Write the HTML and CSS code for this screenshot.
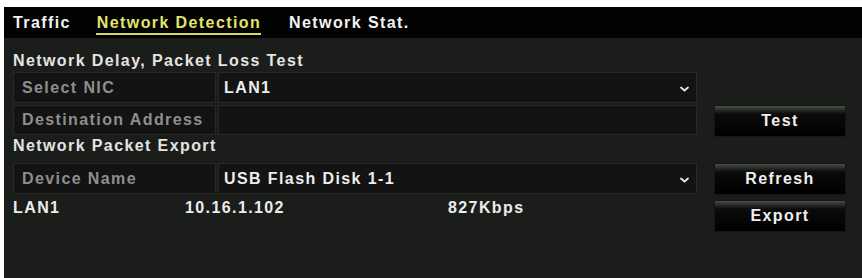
FILE: index.html
```html
<!DOCTYPE html>
<html lang="en">
<head>
<meta charset="utf-8">
<title>Network Detection</title>
<link rel="stylesheet" href="styles.css">
</head>
<body>
<div class="screen">
  <div class="tabs">
    <span class="tab">Traffic</span>
    <span class="tab active">Network Detection</span>
    <span class="tab">Network Stat.</span>
  </div>
  <div class="content">
    <div class="section-title first">Network Delay, Packet Loss Test</div>
    <div class="field">
      <div class="label">Select NIC</div>
      <div class="value">
        <span>LAN1</span>
        <svg class="chev" width="9" height="6" viewBox="0 0 9 6"><path d="M1 1.5 L4.5 4.5 L8 1.5" fill="none" stroke="#e8e8e8" stroke-width="1.8" stroke-linecap="round"/></svg>
      </div>
    </div>
    <div class="empty"></div>
    <div class="field second">
      <div class="label">Destination Address</div>
      <div class="value"></div>
    </div>
    <button class="btn second">Test</button>
    <div class="section-title">Network Packet Export</div>
    <div class="field">
      <div class="label">Device Name</div>
      <div class="value">
        <span>USB Flash Disk 1-1</span>
        <svg class="chev" width="9" height="6" viewBox="0 0 9 6"><path d="M1 1.5 L4.5 4.5 L8 1.5" fill="none" stroke="#e8e8e8" stroke-width="1.8" stroke-linecap="round"/></svg>
      </div>
    </div>
    <button class="btn">Refresh</button>
    <div class="stats">
      <span>LAN1</span>
      <span>10.16.1.102</span>
      <span>827Kbps</span>
    </div>
    <button class="btn export">Export</button>
  </div>
</div>
</body>
</html>
```

FILE: styles.css
```css
* { box-sizing: border-box; }

html, body {
  margin: 0;
  padding: 0;
  background: #ffffff;
  width: 862px;
  height: 278px;
  overflow: hidden;
}

body {
  font-family: "Liberation Sans", Arial, sans-serif;
  font-weight: bold;
  font-size: 16px;
  letter-spacing: 1.4px;
}

.screen {
  margin: 7px 0 0 4px;
  width: 858px;
  height: 271px;
  background: #1b1d1a;
  display: flex;
  flex-direction: column;
}

.tabs {
  height: 31px;
  background: #020202;
  display: flex;
  padding: 5px 0 3px 9px;
}

.tab {
  display: flex;
  align-items: center;
  color: #f2f2f2;
  line-height: 18px;
  border-bottom: 2px solid transparent;
  margin-right: 28px;
}

.tab:first-child {
  margin-right: 26px;
}

.tab.active {
  color: #e3e46e;
  border-bottom-color: #d9db5c;
  margin-left: -1px;
  padding-left: 1px;
}

.content {
  flex: 1;
  display: grid;
  grid-template-columns: 684px 132px;
  grid-template-rows: 34px 31px 34px 26px 32px 1fr;
  column-gap: 17px;
  padding-left: 9px;
}

.section-title {
  grid-column: 1 / 3;
  color: #e4e4e4;
  line-height: 18px;
}

.section-title.first {
  align-self: end;
  padding-bottom: 2px;
}

.field {
  display: grid;
  grid-template-columns: 203px 1fr;
  gap: 2px;
  height: 31px;
}

.field.second {
  margin-top: 2px;
  height: 30px;
}

.label,
.value {
  background: #121312;
  border: 1px solid #272926;
  display: flex;
  align-items: center;
  line-height: 18px;
}

.label {
  color: #8e8f8d;
  padding-left: 8px;
}

.value {
  color: #ededed;
  padding: 0 7px 0 5px;
  justify-content: space-between;
}

.chev {
  flex: none;
  margin-top: 2px;
}

.btn {
  font: inherit;
  letter-spacing: inherit;
  color: #efefef;
  height: 32px;
  border: 1px solid #141514;
  background: linear-gradient(#4a4f48 0, #30342f 3px, #0b0b0b 8px, #000 100%);
  padding: 0;
  cursor: pointer;
}

.btn.second {
  margin-top: 2px;
}

.btn.export {
  margin-top: 5px;
}

.stats {
  display: grid;
  grid-template-columns: 172px 263px auto;
  color: #ececec;
  line-height: 18px;
  padding-top: 4px;
}
```
